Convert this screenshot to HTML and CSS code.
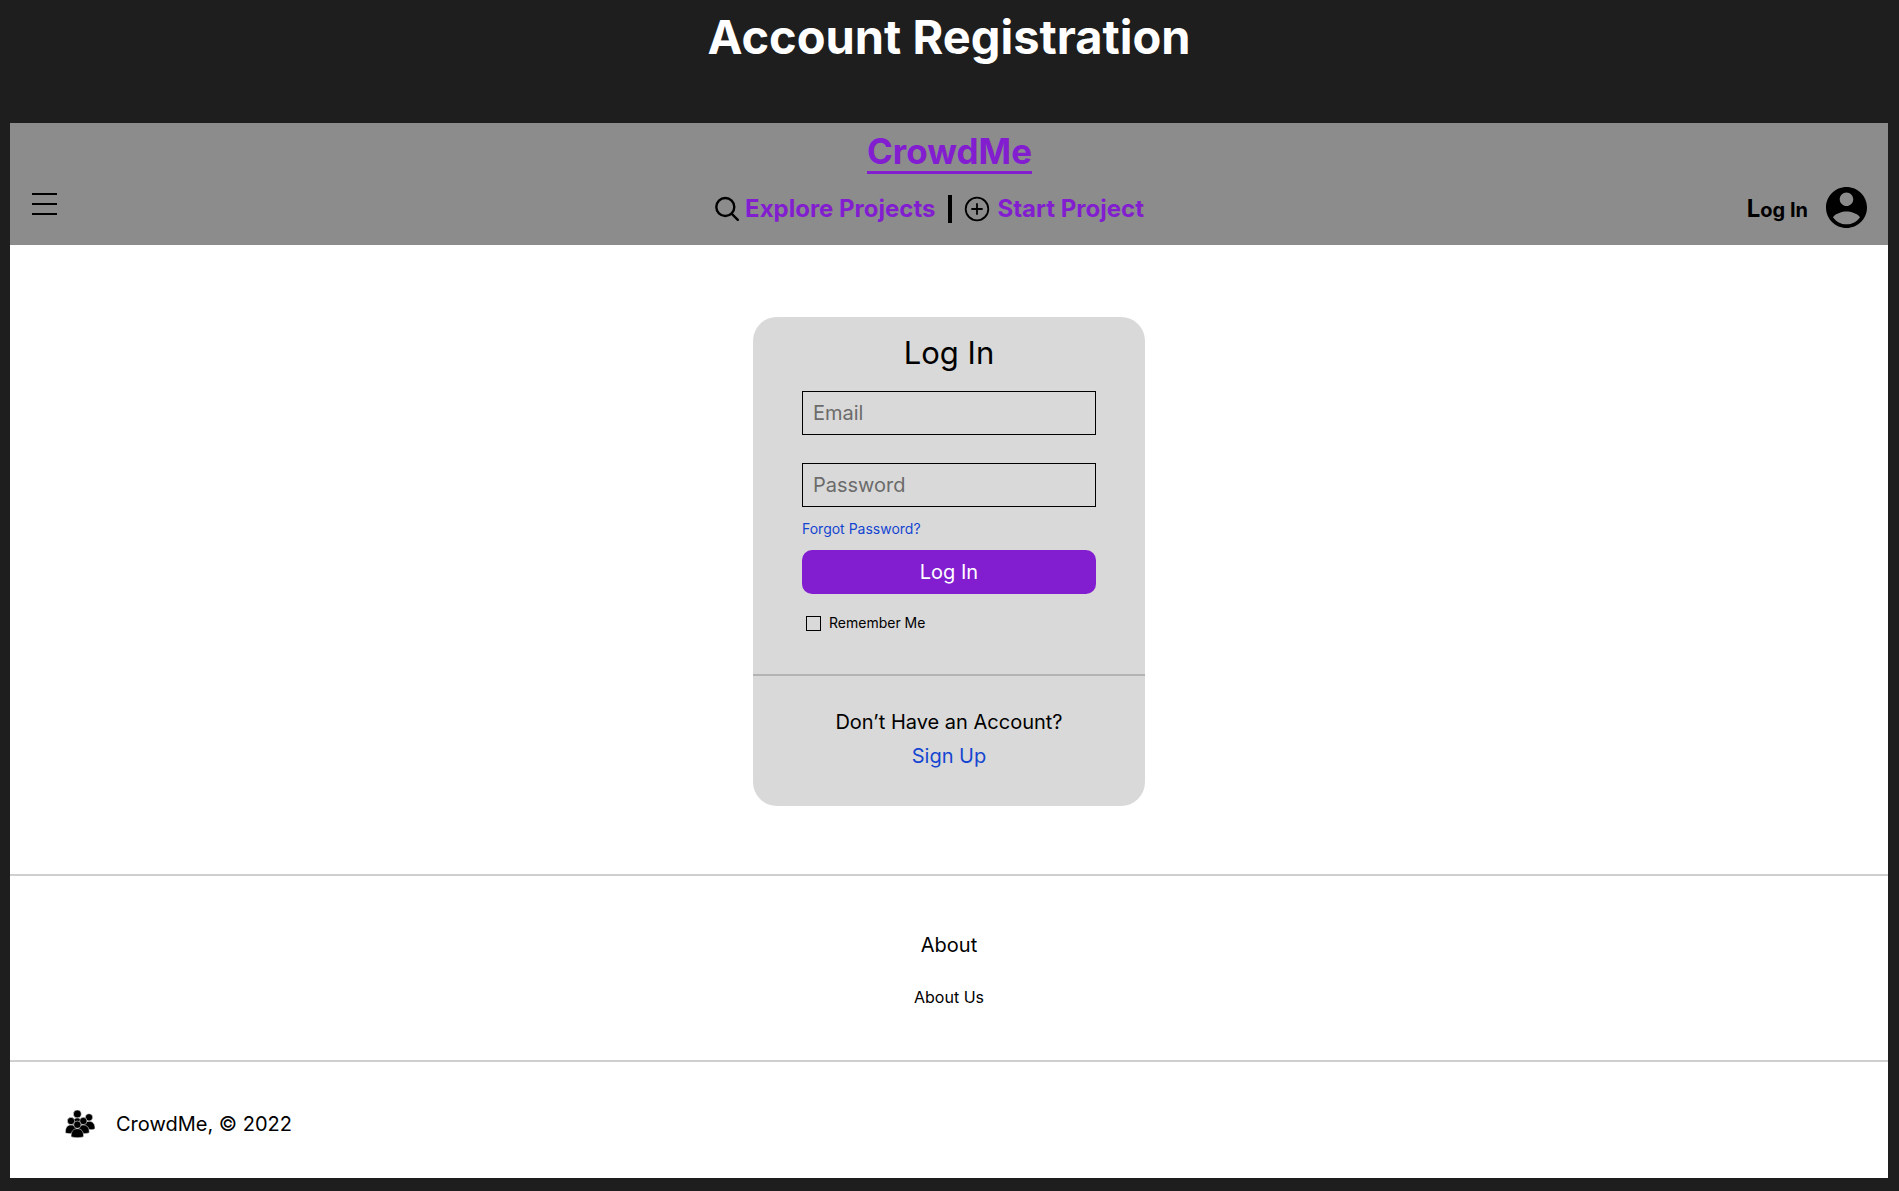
FILE: index.html
```html
<!DOCTYPE html>
<html lang="en">
<head>
<meta charset="utf-8">
<title>CrowdMe – Account Registration</title>
<link rel="stylesheet" href="styles.css">
</head>
<body>
<h1 class="board-title">Account Registration</h1>
<div class="frame">
  <header class="header">
    <a class="brand" href="#">CrowdMe</a>
    <div class="bar">
      <button class="menu" type="button" aria-label="Menu"><span></span><span></span><span></span></button>
      <nav class="nav">
        <a class="nav-link nav-link-left" href="#">
          <svg width="24" height="26" viewBox="0 0 24 26" fill="none" stroke="#000" stroke-width="2.4" stroke-linecap="round"><circle cx="10.300" cy="11" r="9"/><path d="M16.800 17.800l6 6"/></svg>
          Explore Projects
        </a>
        <span class="nav-divider"></span>
        <a class="nav-link" href="#">
          <svg width="26" height="26" viewBox="0 0 26 26" fill="none" stroke="#000" stroke-width="1.8" stroke-linecap="round"><circle cx="13" cy="13" r="11.3"/><path d="M13 8v10M8 13h10"/></svg>
          Start Project
        </a>
      </nav>
      <a class="account" href="#">
        <span class="account-label"><span class="account-initial">L</span>og In</span>
        <svg width="41" height="41" viewBox="2 2 20 20"><path d="M12 2C6.48 2 2 6.48 2 12s4.48 10 10 10 10-4.480 10-10S17.520 2 12 2zm0 2.700c1.820 0 3.300 1.480 3.300 3.300S13.820 11.300 12 11.300 8.700 9.820 8.700 8s1.480-3.300 3.300-3.300zm0 15.500c-2.700 0-5.100-1.300-6.600-3.500C6.800 14.900 9.900 14 12 14s5.200.9 6.600 2.700C17.100 18.900 14.700 20.200 12 20.200z"/></svg>
      </a>
    </div>
  </header>
  <main class="main">
    <section class="card">
      <form class="login">
        <h2 class="card-title">Log In</h2>
        <input class="field" type="email" placeholder="Email" aria-label="Email">
        <input class="field field-last" type="password" placeholder="Password" aria-label="Password">
        <a class="forgot" href="#">Forgot Password?</a>
        <button class="submit" type="button">Log In</button>
        <label class="remember"><input class="tick" type="checkbox">Remember Me</label>
      </form>
      <div class="signup">
        <p>Don’t Have an Account?</p>
        <a href="#">Sign Up</a>
      </div>
    </section>
  </main>
  <section class="about">
    <h3 class="about-title">About</h3>
    <a class="about-link" href="#">About Us</a>
  </section>
  <footer class="footer">
    <svg width="30" height="28" viewBox="0 0 90 84" stroke="#fff" stroke-width="1.500">
      <circle cx="37" cy="12" r="12"/>
      <path d="M22 44c0-14 5-20 15-20s15 6 15 20z"/>
      <circle cx="72" cy="22" r="11"/>
      <path d="M54 58c0-16 6-24 18-24s18 8 18 22c-4 3-8 3-12 3z"/>
      <circle cx="18" cy="33" r="11"/>
      <path d="M1 69c0-16 5-24 17-24s18 8 18 24c-10 3-25 3-35 0z"/>
      <circle cx="55" cy="33" r="11"/>
      <path d="M38 69c0-16 5-24 17-24s18 8 18 23c-8 4-25 4-35 1z"/>
      <circle cx="37" cy="44" r="11"/>
      <path d="M18 80c0-16 7-24 19-24s19 8 19 24c-10 4-28 4-38 0z"/>
    </svg>
    <span>CrowdMe, © 2022</span>
  </footer>
</div>
</body>
</html>
```
FILE: styles.css
```css
* { box-sizing: border-box; }

body {
  margin: 0;
  padding: 8px 11px 13px 10px;
  background: #1e1e1e;
  color: #000;
  font-family: Inter, "Liberation Sans", sans-serif;
  font-size: 20px;
  line-height: 24px;
}

h1, h2, h3, p { margin: 0; }
a { color: inherit; text-decoration: none; }
svg { display: block; flex: none; }
button, input { font: inherit; }

.board-title {
  margin-bottom: 57px;
  color: #fff;
  font-size: 47px;
  line-height: 58px;
  font-weight: 700;
  text-align: center;
}

.frame { background: #fff; }

.header {
  display: flex;
  flex-direction: column;
  align-items: center;
  gap: 13px;
  padding: 8px 21px 17px 22px;
  background: #8c8c8c;
}

.brand {
  border-bottom: 3px solid #821dd0;
  color: #821dd0;
  font-size: 35px;
  line-height: 40px;
  font-weight: 700;
}

.bar {
  display: grid;
  grid-template-columns: 1fr auto 1fr;
  align-items: center;
  width: 100%;
}

.menu {
  display: flex;
  flex-direction: column;
  gap: 8px;
  width: 25px;
  margin-bottom: 7px;
  padding: 0;
  border: 0;
  background: none;
}
.menu span { height: 2px; width: 100%; background: #000; }

.nav {
  display: grid;
  grid-template-columns: 1fr auto 1fr;
  align-items: center;
  gap: 12px;
  padding-top: 2px;
}
.nav-link {
  display: flex;
  align-items: center;
  gap: 8px;
  color: #821dd0;
  font-size: 24px;
  line-height: 28px;
  font-weight: 700;
  white-space: nowrap;
}
.nav-link-left {
  justify-content: flex-end;
  gap: 6px;
}
.nav-divider { width: 4px; height: 28px; background: #000; }

.account {
  display: flex;
  align-items: center;
  justify-self: end;
  gap: 18px;
  font-weight: 700;
}
.account-label { padding-top: 4px; }
.account-initial { font-size: 24px; }

.main {
  display: flex;
  justify-content: center;
  padding: 72px 16px 68px;
}

.card {
  width: 392px;
  border-radius: 24px;
  background: #d9d9d9;
}

.login {
  display: flex;
  flex-direction: column;
  align-items: stretch;
  padding: 17px 49px 41px;
}
.card-title {
  margin-bottom: 20px;
  font-size: 31px;
  line-height: 37px;
  font-weight: 400;
  text-align: center;
}
.field {
  width: 100%;
  height: 44px;
  margin-bottom: 28px;
  padding: 0 10px;
  border: 1px solid #000;
  border-radius: 0;
  background: none;
}
.field-last { margin-bottom: 12px; }
.field::placeholder { color: #6b6b6b; opacity: 1; }

.forgot {
  align-self: flex-start;
  margin-bottom: 11px;
  color: #1546d2;
  font-size: 14px;
  line-height: 20px;
}
.submit {
  height: 44px;
  margin-bottom: 19px;
  border: 0;
  border-radius: 10px;
  background: #821dd0;
  color: #fff;
}
.remember {
  display: flex;
  align-items: center;
  gap: 8px;
  padding-left: 4px;
  font-size: 14px;
  line-height: 20px;
}
.tick {
  appearance: none;
  width: 15px;
  height: 15px;
  margin: 0;
  border: 1px solid #000;
}
.tick:checked { background: #821dd0; }

.signup {
  display: flex;
  flex-direction: column;
  align-items: center;
  gap: 10px;
  padding: 34px 16px 38px;
  border-top: 2px solid #b3b3b3;
}
.signup a { color: #1546d2; }

.about {
  display: flex;
  flex-direction: column;
  align-items: center;
  gap: 28px;
  padding: 57px 16px 51px;
  border-top: 2px solid #cfcfcf;
  border-bottom: 2px solid #cfcfcf;
}
.about-title { font-size: 20px; font-weight: 400; }
.about-link { font-size: 16px; }

.footer {
  display: flex;
  align-items: center;
  gap: 21px;
  padding: 48px 55px 40px;
}
```
